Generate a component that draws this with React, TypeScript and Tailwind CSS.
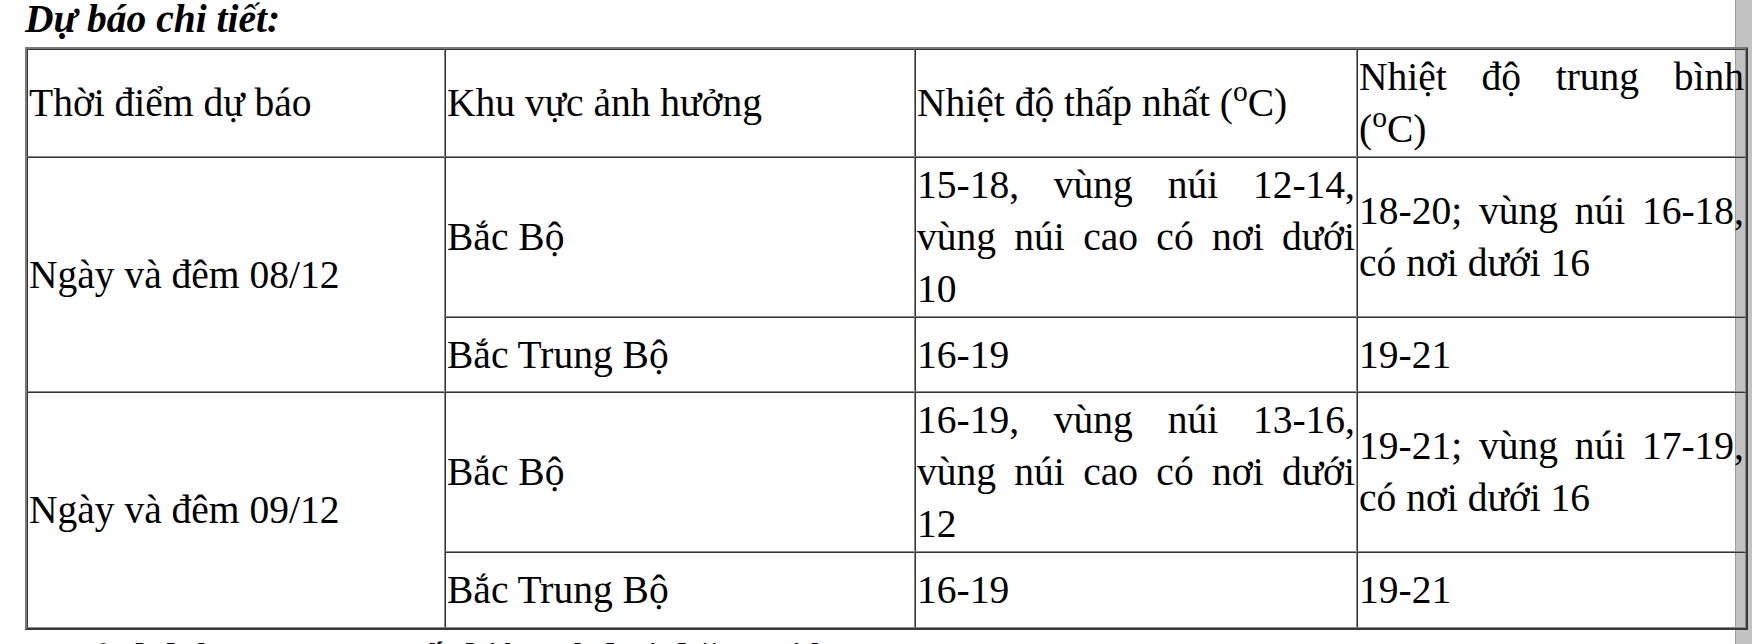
export default function App() {
  const cell =
    "border-t border-l border-r border-b border-t-[#333] border-l-[#333] border-r-[#8a8a8a] border-b-[#8a8a8a] px-px py-px align-middle text-justify font-normal";
  return (
    <div className="h-[644px] overflow-hidden flex flex-col pl-[25px] text-black font-['Liberation_Serif','Times_New_Roman',serif] text-[39.5px] leading-[52px] bg-[linear-gradient(to_right,#fff_1735px,#9d9d9d_1735px,#9d9d9d_1736px,#c2c2c2_1736px)]">
      <div className="font-bold italic -mt-[7px] shrink-0">Dự báo chi tiết:</div>
      <table className="mt-[2px] shrink-0 w-[1723px] table-fixed border-separate border-spacing-0 border-2 border-t-[#7a7a7a] border-l-[#7a7a7a] border-r-[#3a3a3a] border-b-[#3a3a3a]">
        <colgroup>
          <col className="w-[418px]" />
          <col className="w-[470px]" />
          <col className="w-[442px]" />
          <col className="w-[389px]" />
        </colgroup>
        <tbody>
          <tr>
            <td className={cell}>Thời điểm dự báo</td>
            <td className={cell}>Khu vực ảnh hưởng</td>
            <td className={cell}>
              Nhiệt độ thấp nhất (<sup>o</sup>C)
            </td>
            <td className={cell}>
              Nhiệt độ trung bình (<sup>o</sup>C)
            </td>
          </tr>
          <tr>
            <td className={cell} rowSpan={2}>
              Ngày và đêm 08/12
            </td>
            <td className={cell}>Bắc Bộ</td>
            <td className={cell}>15-18, vùng núi 12-14, vùng núi cao có nơi dưới 10</td>
            <td className={cell}>18-20; vùng núi 16-18, có nơi dưới 16</td>
          </tr>
          <tr className="h-[75px]">
            <td className={cell}>Bắc Trung Bộ</td>
            <td className={cell}>16-19</td>
            <td className={cell}>19-21</td>
          </tr>
          <tr>
            <td className={cell} rowSpan={2}>
              Ngày và đêm 09/12
            </td>
            <td className={cell}>Bắc Bộ</td>
            <td className={cell}>16-19, vùng núi 13-16, vùng núi cao có nơi dưới 12</td>
            <td className={cell}>19-21; vùng núi 17-19, có nơi dưới 16</td>
          </tr>
          <tr className="h-[76px]">
            <td className={cell}>Bắc Trung Bộ</td>
            <td className={cell}>16-19</td>
            <td className={cell}>19-21</td>
          </tr>
        </tbody>
      </table>
      <div className="font-bold mt-[2px] whitespace-nowrap shrink-0">
        2. Cảnh báo nguy cơ xuất hiện rét hại, băng giá
      </div>
    </div>
  );
}
